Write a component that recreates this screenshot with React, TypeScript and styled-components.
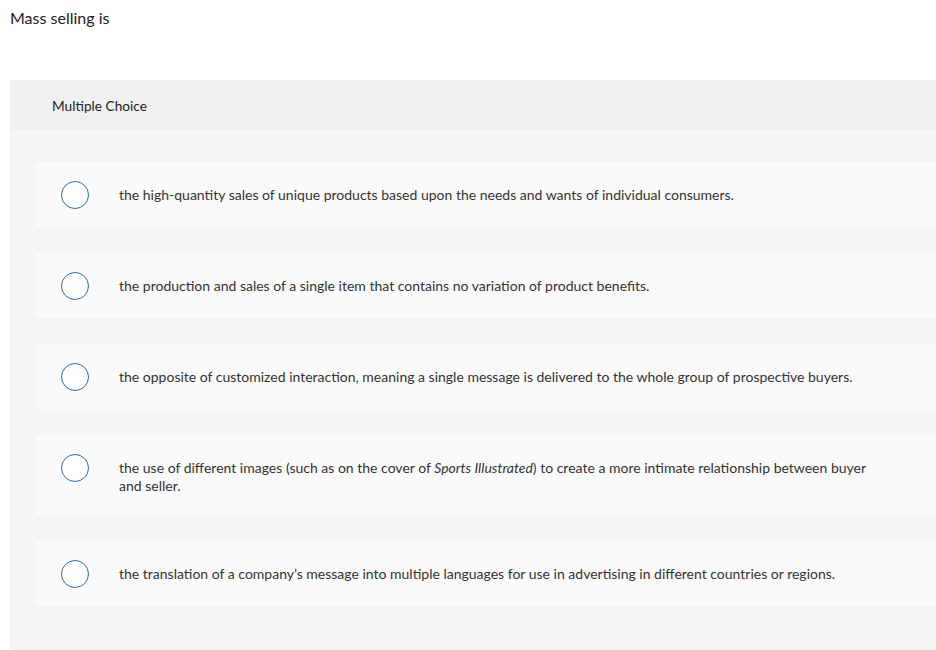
import styled, { createGlobalStyle } from "styled-components";

const GlobalStyle = createGlobalStyle`
    html, body {
        margin: 0;
        padding: 0;
        background: #fff;
        overflow: hidden;
    }
    body {
        font-family: 'Lato', 'Roboto', sans-serif;
        color: #333;
    }
`;

const choices = [
    <>the high-quantity sales of unique products based upon the needs and wants of individual consumers.</>,
    <>the production and sales of a single item that contains no variation of product benefits.</>,
    <>the opposite of customized interaction, meaning a single message is delivered to the whole group of prospective buyers.</>,
    <>
        the use of different images (such as on the cover of <em>Sports Illustrated</em>) to create a more intimate
        relationship between buyer and seller.
    </>,
    <>the translation of a company’s message into multiple languages for use in advertising in different countries or regions.</>,
];

export default function App() {
    return (
        <PageStyled>
            <GlobalStyle />
            <QuestionStyled>Mass selling is</QuestionStyled>

            <PanelStyled>
                <HeaderStyled>Multiple Choice</HeaderStyled>
                <ChoicesStyled>
                    {choices.map((text, i) => (
                        <ChoiceStyled key={i}>
                            <RadioStyled />
                            <ChoiceTextStyled>{text}</ChoiceTextStyled>
                        </ChoiceStyled>
                    ))}
                </ChoicesStyled>
            </PanelStyled>
        </PageStyled>
    );
}

const PageStyled = styled.div`
    padding-left: 10px;
`;

const QuestionStyled = styled.div`
    font-size: 16px;
    line-height: 20px;
    padding-top: 8px;
    height: 72px;
    color: #222;
`;

const PanelStyled = styled.div`
    display: flex;
    flex-direction: column;
`;

const HeaderStyled = styled.div`
    height: 50px;
    display: flex;
    align-items: center;
    padding-left: 42px;
    background-color: #f0f0f0;
    font-size: 13.7px;
    color: #222;
`;

const ChoicesStyled = styled.div`
    display: flex;
    flex-direction: column;
    gap: 26px;
    padding: 32px 0 44px 26px;
    background-color: #f5f5f5;
`;

const ChoiceStyled = styled.div`
    display: flex;
    align-items: flex-start;
    gap: 30px;
    padding: 19px 60px 18px 25px;
    background-color: #fafafa;
    border-radius: 3px 0 0 3px;
`;

const RadioStyled = styled.span`
    flex: none;
    box-sizing: border-box;
    width: 28px;
    height: 28px;
    border-radius: 50%;
    border: 1.5px solid #2a6bb0;
    background: #fff;
`;

const ChoiceTextStyled = styled.div`
    margin: 5px 0 2px;
    font-size: 14px;
    line-height: 18px;
    color: #333;

    em {
        font-style: italic;
    }
`;
